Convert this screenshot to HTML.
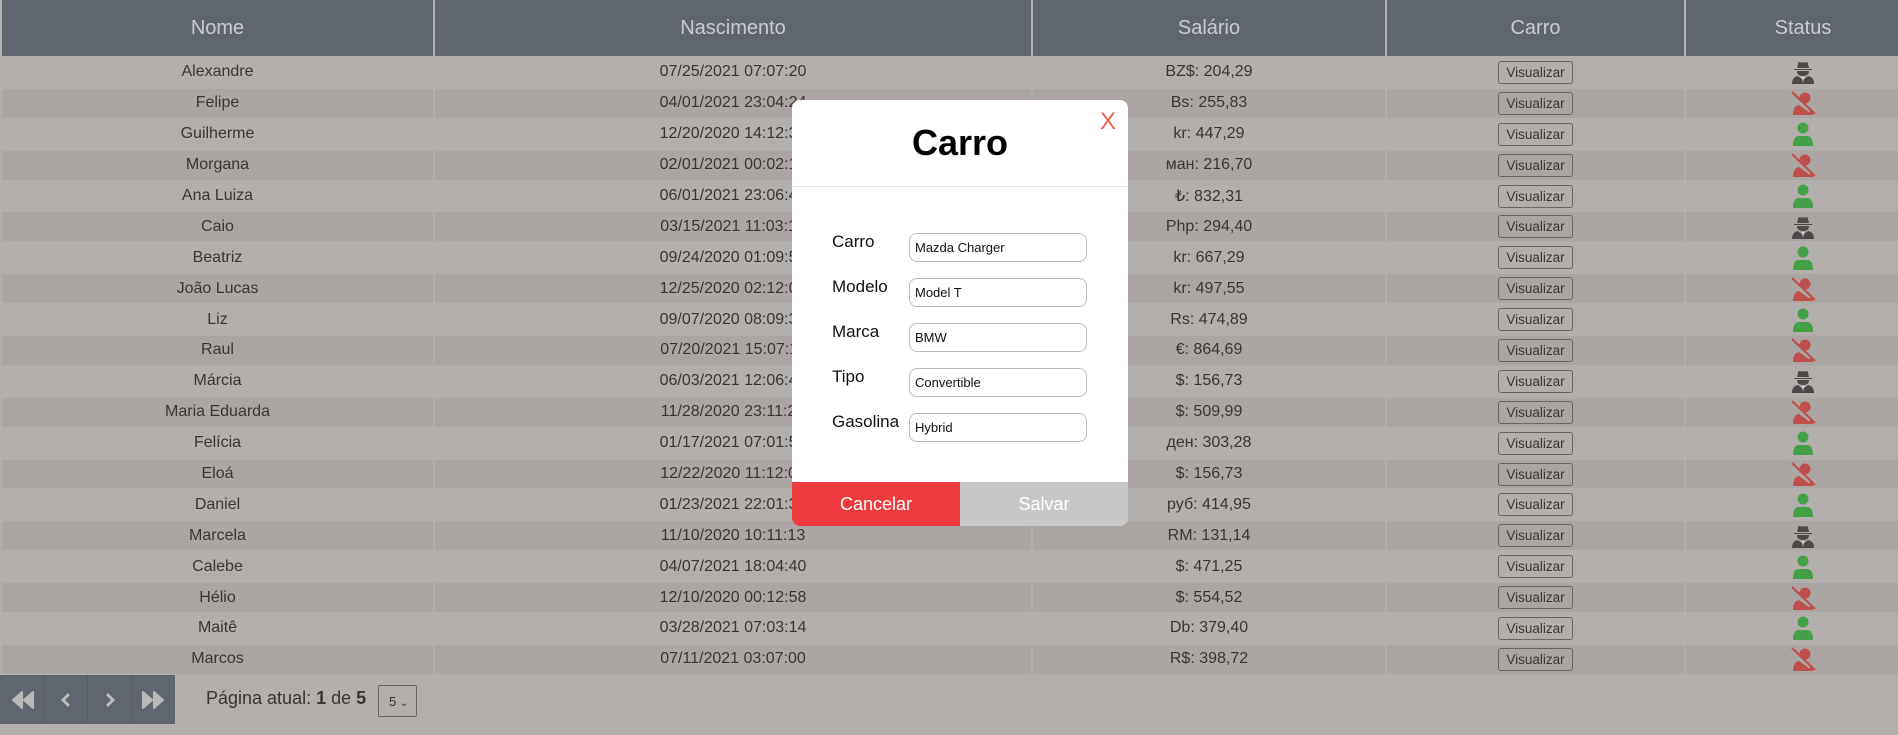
<!DOCTYPE html>
<html><head><meta charset="utf-8"><style>
*{box-sizing:border-box;margin:0;padding:0}
body{width:1898px;height:735px;overflow:hidden;background:#b3afad;font-family:"Liberation Sans",sans-serif;color:#3a3433;position:relative}
table{position:absolute;left:0;top:-2px;width:1922px;border-collapse:separate;border-spacing:2px;table-layout:fixed}
th{background:#5f6670;color:#c9cbcd;font-weight:normal;font-size:20px;height:56px}
td{height:28.9px;text-align:center;font-size:16px;padding:0}
tr:nth-child(odd) td{background:#aba6a4}
.v{display:inline-block;width:75px;height:23px;border:1px solid #6a6462;border-radius:3px;font-size:13.5px;line-height:21px;color:#3a3433;vertical-align:middle}
td svg{vertical-align:middle}
.pg{position:absolute;left:0;top:675px;width:175px;height:49px;background:#5f6670;display:flex}
.pg div{flex:1;border-right:1px solid #565d66;display:flex;align-items:center;justify-content:center}
.pg div:last-child{border:none}
.pt{position:absolute;left:206px;top:688px;font-size:18px}
.sel{position:absolute;left:378px;top:685px;width:39px;height:32px;border:1px solid #6a6462;border-radius:2px;font-size:13px;padding:8px 0 0 10px}
.modal{position:absolute;left:792px;top:100px;width:336px;height:426px;background:#fff;border-radius:8px;overflow:hidden}
.modal h2{position:absolute;left:0;right:0;top:22px;text-align:center;font-size:36px;font-weight:bold;color:#000}
.x{position:absolute;left:308px;top:8px;color:#f0624d;font-size:24px}
.hr{position:absolute;left:0;right:0;top:86px;border-top:1px solid #e3e3e3}
.lb{position:absolute;left:40px;font-size:17px;color:#111}
.in{position:absolute;left:117px;width:178px;height:29px;border:1px solid #bbb;border-radius:8px;font-size:13px;padding:6px 0 0 5px;color:#111}
.b1,.b2{position:absolute;top:382px;height:44px;width:168px;color:#fff;font-size:18px;text-align:center;line-height:44px}
.b1{left:0;background:#ef3b3e}.b2{left:168px;background:#c8c8c8}
</style></head><body>
<svg width="0" height="0" style="position:absolute"><defs>
<symbol id="spy" viewBox="0 0 26 24"><path d="M7 8 L8.5 2 Q13 3 17.5 2 L19 8 Z M4 9 H22 V10 H4Z" fill="#4e4848"/><path d="M7 11 H19 Q19 16 13 16 Q7 16 7 11Z" fill="#4e4848"/><path d="M2 24 Q2 17 8 16 L13 20 L18 16 Q24 17 24 24Z" fill="#4e4848"/><path d="M12 17 L13 23 L14 17Z" fill="#ddd"/></symbol>
<symbol id="ok" viewBox="0 0 26 24"><circle cx="13" cy="6" r="5.5" fill="#44a047"/><path d="M3 24 Q3 14 9 14 H17 Q23 14 23 24Z" fill="#44a047"/></symbol>
<symbol id="no" viewBox="0 0 26 24"><circle cx="15" cy="7" r="5.5" fill="#bf4f4c"/><path d="M3 24 Q3 15 9 14 L20 22 V24Z" fill="#bf4f4c"/><path d="M21 18 Q23 20 23 24 L18 24Z" fill="#bf4f4c"/><path d="M2 1 L25 23" stroke="#bf4f4c" stroke-width="2.2"/></symbol>
</defs></svg>
<table>
<colgroup><col style="width:431px"><col style="width:596px"><col style="width:352px"><col style="width:297px"><col style="width:234px"></colgroup>
<tr><th>Nome</th><th>Nascimento</th><th>Salário</th><th>Carro</th><th>Status</th></tr>
<tr><td>Alexandre</td><td>07/25/2021 07:07:20</td><td>BZ$: 204,29</td><td><span class="v">Visualizar</span></td><td><svg width="26" height="24"><use href="#spy"/></svg></td></tr>
<tr><td>Felipe</td><td>04/01/2021 23:04:24</td><td>Bs: 255,83</td><td><span class="v">Visualizar</span></td><td><svg width="26" height="24"><use href="#no"/></svg></td></tr>
<tr><td>Guilherme</td><td>12/20/2020 14:12:32</td><td>kr: 447,29</td><td><span class="v">Visualizar</span></td><td><svg width="26" height="24"><use href="#ok"/></svg></td></tr>
<tr><td>Morgana</td><td>02/01/2021 00:02:16</td><td>ман: 216,70</td><td><span class="v">Visualizar</span></td><td><svg width="26" height="24"><use href="#no"/></svg></td></tr>
<tr><td>Ana Luiza</td><td>06/01/2021 23:06:43</td><td>₺: 832,31</td><td><span class="v">Visualizar</span></td><td><svg width="26" height="24"><use href="#ok"/></svg></td></tr>
<tr><td>Caio</td><td>03/15/2021 11:03:19</td><td>Php: 294,40</td><td><span class="v">Visualizar</span></td><td><svg width="26" height="24"><use href="#spy"/></svg></td></tr>
<tr><td>Beatriz</td><td>09/24/2020 01:09:52</td><td>kr: 667,29</td><td><span class="v">Visualizar</span></td><td><svg width="26" height="24"><use href="#ok"/></svg></td></tr>
<tr><td>João Lucas</td><td>12/25/2020 02:12:05</td><td>kr: 497,55</td><td><span class="v">Visualizar</span></td><td><svg width="26" height="24"><use href="#no"/></svg></td></tr>
<tr><td>Liz</td><td>09/07/2020 08:09:37</td><td>Rs: 474,89</td><td><span class="v">Visualizar</span></td><td><svg width="26" height="24"><use href="#ok"/></svg></td></tr>
<tr><td>Raul</td><td>07/20/2021 15:07:11</td><td>€: 864,69</td><td><span class="v">Visualizar</span></td><td><svg width="26" height="24"><use href="#no"/></svg></td></tr>
<tr><td>Márcia</td><td>06/03/2021 12:06:48</td><td>$: 156,73</td><td><span class="v">Visualizar</span></td><td><svg width="26" height="24"><use href="#spy"/></svg></td></tr>
<tr><td>Maria Eduarda</td><td>11/28/2020 23:11:27</td><td>$: 509,99</td><td><span class="v">Visualizar</span></td><td><svg width="26" height="24"><use href="#no"/></svg></td></tr>
<tr><td>Felícia</td><td>01/17/2021 07:01:50</td><td>ден: 303,28</td><td><span class="v">Visualizar</span></td><td><svg width="26" height="24"><use href="#ok"/></svg></td></tr>
<tr><td>Eloá</td><td>12/22/2020 11:12:09</td><td>$: 156,73</td><td><span class="v">Visualizar</span></td><td><svg width="26" height="24"><use href="#no"/></svg></td></tr>
<tr><td>Daniel</td><td>01/23/2021 22:01:33</td><td>руб: 414,95</td><td><span class="v">Visualizar</span></td><td><svg width="26" height="24"><use href="#ok"/></svg></td></tr>
<tr><td>Marcela</td><td>11/10/2020 10:11:13</td><td>RM: 131,14</td><td><span class="v">Visualizar</span></td><td><svg width="26" height="24"><use href="#spy"/></svg></td></tr>
<tr><td>Calebe</td><td>04/07/2021 18:04:40</td><td>$: 471,25</td><td><span class="v">Visualizar</span></td><td><svg width="26" height="24"><use href="#ok"/></svg></td></tr>
<tr><td>Hélio</td><td>12/10/2020 00:12:58</td><td>$: 554,52</td><td><span class="v">Visualizar</span></td><td><svg width="26" height="24"><use href="#no"/></svg></td></tr>
<tr><td>Maitê</td><td>03/28/2021 07:03:14</td><td>Db: 379,40</td><td><span class="v">Visualizar</span></td><td><svg width="26" height="24"><use href="#ok"/></svg></td></tr>
<tr><td>Marcos</td><td>07/11/2021 03:07:00</td><td>R$: 398,72</td><td><span class="v">Visualizar</span></td><td><svg width="26" height="24"><use href="#no"/></svg></td></tr>
</table>
<div class="pg">
<div><svg width="26" height="18" viewBox="0 0 26 18"><path d="M13 1 L4 9 L13 17Z M24 1 L15 9 L24 17Z" fill="#b9b9b9" stroke="#b9b9b9" stroke-width="2" stroke-linejoin="round"/></svg></div>
<div><svg width="12" height="16" viewBox="0 0 12 16"><path d="M9 2 L3 8 L9 14" fill="none" stroke="#b9b9b9" stroke-width="3"/></svg></div>
<div><svg width="12" height="16" viewBox="0 0 12 16"><path d="M3 2 L9 8 L3 14" fill="none" stroke="#b9b9b9" stroke-width="3"/></svg></div>
<div><svg width="26" height="18" viewBox="0 0 26 18"><path d="M2 1 L11 9 L2 17Z M13 1 L22 9 L13 17Z" fill="#b9b9b9" stroke="#b9b9b9" stroke-width="2" stroke-linejoin="round"/></svg></div>
</div>
<div class="pt">Página atual: <b>1</b> de <b>5</b></div>
<div class="sel">5 <span style="font-size:10px">&#8964;</span></div>
<div class="modal">
<h2>Carro</h2><div class="x">X</div><div class="hr"></div>
<div class="lb" style="top:132px">Carro</div><div class="in" style="top:133px">Mazda Charger</div>
<div class="lb" style="top:177px">Modelo</div><div class="in" style="top:178px">Model T</div>
<div class="lb" style="top:222px">Marca</div><div class="in" style="top:223px">BMW</div>
<div class="lb" style="top:267px">Tipo</div><div class="in" style="top:268px">Convertible</div>
<div class="lb" style="top:312px">Gasolina</div><div class="in" style="top:313px">Hybrid</div>
<div class="b1">Cancelar</div><div class="b2">Salvar</div>
</div>
</body></html>
